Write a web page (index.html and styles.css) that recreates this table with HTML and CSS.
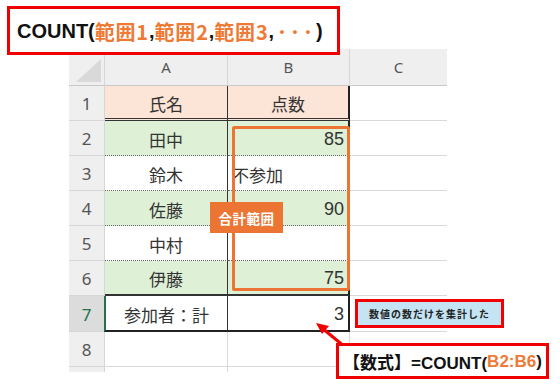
FILE: index.html
```html
<!DOCTYPE html>
<html lang="ja">
<head>
<meta charset="utf-8">
<link rel="stylesheet" href="styles.css">
</head>
<body>
<div class="page">
  <div class="sheet">
    <div class="corner"><span class="tri"></span></div>
    <div class="colh">A</div>
    <div class="colh">B</div>
    <div class="colh last">C</div>

    <div class="rowh">1</div>
    <div class="c a hd">氏名</div>
    <div class="c b hd ctr">点数</div>
    <div class="c cc"></div>

    <div class="rowh">2</div>
    <div class="c a g dot">田中</div>
    <div class="c b g dot num">85</div>
    <div class="c cc"></div>

    <div class="rowh">3</div>
    <div class="c a dot">鈴木</div>
    <div class="c b dot left">不参加</div>
    <div class="c cc"></div>

    <div class="rowh">4</div>
    <div class="c a g dot">佐藤</div>
    <div class="c b g dot num">90</div>
    <div class="c cc"></div>

    <div class="rowh">5</div>
    <div class="c a dot">中村</div>
    <div class="c b dot num"></div>
    <div class="c cc"></div>

    <div class="rowh">6</div>
    <div class="c a g last6">伊藤</div>
    <div class="c b g last6 num">75</div>
    <div class="c cc"></div>

    <div class="rowh sel">7</div>
    <div class="c a tot">参加者：計</div>
    <div class="c b tot num">3</div>
    <div class="c cc"></div>

    <div class="rowh">8</div>
    <div class="c plain"></div>
    <div class="c plain"></div>
    <div class="c cc"></div>

    <div class="rowh stub"></div>
    <div class="c plain stub"></div>
    <div class="c plain stub"></div>
    <div class="c cc stub"></div>
  </div>

  <div class="title">COUNT(<span class="o">範囲1</span>,<span class="o">範囲2</span>,<span class="o">範囲3</span>,<span class="o dots">･･･</span>)</div>

  <div class="range"></div>
  <div class="range-label">合計範囲</div>

  <div class="note">数値の数だけを集計した</div>

  <svg class="arrow" width="60" height="50" viewBox="0 0 60 50">
    <line x1="43" y1="43" x2="20" y2="24" stroke="#f00000" stroke-width="3"/>
    <polygon points="14,19 27,22 20,30" fill="#f00000"/>
  </svg>

  <div class="formula">【数式】=COUNT(<span class="o">B2:B6</span>)</div>
</div>
</body>
</html>
```

FILE: styles.css
```css
* { box-sizing: border-box; }
html, body { margin: 0; padding: 0; background: #fff; }
body { width: 560px; height: 387px; overflow: hidden; font-family: "Noto Sans CJK JP", "Noto Sans", sans-serif; }

.page { position: relative; width: 560px; height: 387px; padding: 49px 0 0 69px; }

.sheet {
  display: grid;
  grid-template-columns: 36px 123px 122px 97px;
  grid-template-rows: 37px 35px 35px 35px 35px 35px 35px 36px 35px 5px;
  width: 378px;
}

.corner { background: #efefef; border-right: 1px solid #d6d6d6; border-bottom: 1px solid #c8c8c8; position: relative; }
.tri { position: absolute; right: 3px; bottom: 3px; width: 0; height: 0; border-left: 25px solid transparent; border-bottom: 23px solid #d9d9d9; }

.colh {
  background: #efefef; border-right: 1px solid #d6d6d6; border-bottom: 1px solid #c8c8c8;
  display: flex; align-items: center; justify-content: center;
  font-family: "Noto Sans", sans-serif; font-size: 15px; color: #555;
}
.colh.last { border-right: none; }

.rowh {
  background: #efefef; border-right: 1px solid #d6d6d6; border-bottom: 1px solid #d6d6d6;
  display: flex; align-items: center; justify-content: center;
  font-family: "Noto Sans", sans-serif; font-size: 17px; color: #555; padding-top: 1px;
}
.rowh.sel { background: #dcdcdc; color: #217346; }
.rowh.stub, .c.stub { border-bottom: none; }

.c {
  border-right: 1px solid #d9d9d9; border-bottom: 1px solid #d9d9d9;
  display: flex; align-items: center; justify-content: center;
  font-size: 17px; color: #333; padding-top: 2px; white-space: nowrap;
}
.c.cc { border-right: none; }

.c.a { border-right: 1px solid #333; }
.c.b { border-right: 2px solid #222; }
.c.hd { background: #fce4d6; border-bottom: 3px double #333; }
.c.g { background: #def0d6; }
.c.dot { border-bottom: 1px dotted #666; }
.c.last6 { border-bottom: 2px solid #333; }
.c.num { justify-content: flex-end; padding-right: 4px; font-family: "Liberation Sans", sans-serif; font-size: 18px; }
.c.left { justify-content: flex-start; padding-left: 4px; }
.c.tot { border-bottom: 2px solid #222; }
.c.a.tot { border-left: 2px solid #217346; margin-left: -1px; }
.c.plain { border-right: 1px solid #d9d9d9; }

.title {
  position: absolute; left: 7px; top: 6px; width: 333px; height: 49px;
  border: 3px solid #f00000; background: #fff;
  display: flex; align-items: center; padding-left: 7px; padding-top: 1px;
  font-family: "Liberation Sans", "Noto Sans CJK JP", sans-serif; font-weight: bold; font-size: 20px; color: #111;
}
.o { color: #ee7a35; }
.title .o { font-family: "Noto Sans CJK JP", sans-serif; letter-spacing: 0.8px; }
.title .dots { letter-spacing: 3px; margin-left: 3px; }

.range {
  position: absolute; left: 232px; top: 126px; width: 118px; height: 165px;
  border: 3px solid #ed7533; border-radius: 2px;
}
.range-label {
  position: absolute; left: 210px; top: 202px; width: 73px; height: 31px;
  background: #ed7533; color: #fff; font-weight: bold; font-size: 13.5px;
  display: flex; align-items: center; justify-content: center; letter-spacing: 0.5px;
}

.note {
  position: absolute; left: 355px; top: 299px; width: 149px; height: 29px;
  background: #c4e4f3; border: 3px solid #f00000;
  display: flex; align-items: center; justify-content: center;
  font-size: 10px; font-weight: bold; color: #222; letter-spacing: 1px;
}

.arrow { position: absolute; left: 302px; top: 304px; }

.formula {
  position: absolute; left: 336px; top: 343px; width: 213px; height: 36px;
  background: #fff; border: 3px solid #f00000;
  display: flex; align-items: center; justify-content: center; padding-top: 1px;
  font-family: "Liberation Sans", "Noto Sans CJK JP", sans-serif; font-weight: bold; font-size: 17px; color: #111;
}
```
